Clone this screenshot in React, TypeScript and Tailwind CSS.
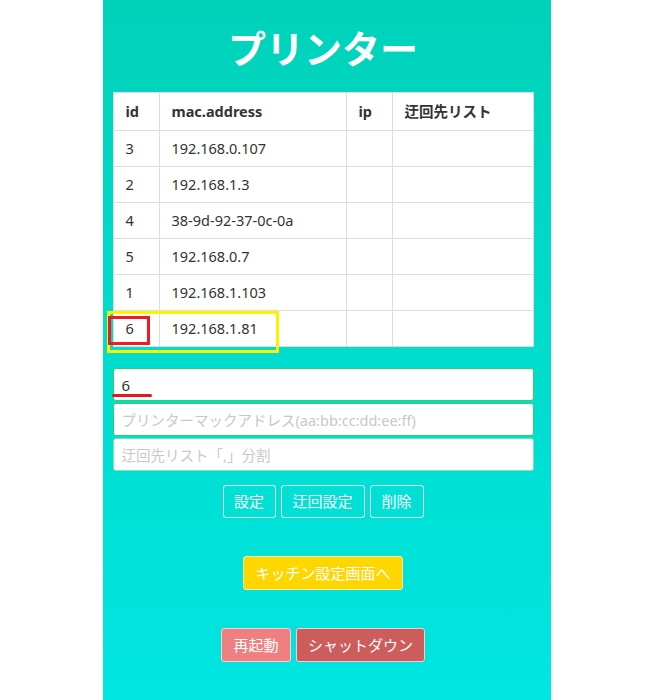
import { useState } from "react";

const printers = [
  { id: "3", mac: "192.168.0.107", ip: "", detour: "" },
  { id: "2", mac: "192.168.1.3", ip: "", detour: "" },
  { id: "4", mac: "38-9d-92-37-0c-0a", ip: "", detour: "" },
  { id: "5", mac: "192.168.0.7", ip: "", detour: "" },
  { id: "1", mac: "192.168.1.103", ip: "", detour: "" },
  { id: "6", mac: "192.168.1.81", ip: "", detour: "" },
];

const font = "font-['Noto_Sans','Noto_Sans_CJK_JP',sans-serif]";

export default function App() {
  const [printerId, setPrinterId] = useState("6");

  return (
    <div className={`flex min-h-[700px] justify-center bg-white ${font}`}>
      <main className="flex min-h-[700px] w-[448px] flex-col bg-gradient-to-b from-[#00d2b9] to-[#00e6e1] pb-10 pl-[10px] pr-[17px]">
        <h1 className="pt-[21px] pb-[17px] text-center text-[38px] leading-[54px] font-bold text-white">
          プリンター
        </h1>

        <div className="relative">
          <table className="w-full border-collapse bg-white text-[14.5px] text-[#333]">
            <thead>
              <tr className="h-[38px] text-left">
                <th className="w-[46px] border border-[#ddd] pl-3 font-bold">id</th>
                <th className="w-[187px] border border-[#ddd] pl-3 font-bold">mac.address</th>
                <th className="w-[46px] border border-[#ddd] pl-3 font-bold">ip</th>
                <th className="border border-[#ddd] pl-3 font-bold">迂回先リスト</th>
              </tr>
            </thead>
            <tbody>
              {printers.map((p) => (
                <tr key={p.id} className="h-[36px]">
                  <td className="border border-[#ddd] pl-3">{p.id}</td>
                  <td className="border border-[#ddd] pl-3">{p.mac}</td>
                  <td className="border border-[#ddd] pl-3">{p.ip}</td>
                  <td className="border border-[#ddd] pl-3">{p.detour}</td>
                </tr>
              ))}
            </tbody>
          </table>
          {/* annotation boxes */}
          <div className="pointer-events-none absolute top-[219px] left-[-6px] h-[42px] w-[172px] border-[3px] border-[#fff200]" />
          <div className="pointer-events-none absolute top-[224px] left-[-5px] h-[29px] w-[42px] border-[3px] border-[#ed1c24]" />
        </div>

        <form className="mt-[21px] flex flex-col gap-[2px]">
          <div className="relative">
            <input
              value={printerId}
              onChange={(e) => setPrinterId(e.target.value)}
              className="h-[33px] w-full rounded-[3px] border border-[#2fd06a] bg-white px-2 text-[15px] text-[#333] outline-none"
            />
            <div className="pointer-events-none absolute top-[26px] left-[-1px] h-[3px] w-[40px] rounded-full bg-[#e5161d]" />
          </div>
          <input
            placeholder="プリンターマックアドレス(aa:bb:cc:dd:ee:ff)"
            className="h-[33px] w-full rounded-[3px] border border-[#2fd06a] bg-white px-2 text-[14.5px] text-[#333] outline-none placeholder:text-[#c8c8c8]"
          />
          <input
            placeholder="迂回先リスト「,」分割"
            className="h-[33px] w-full rounded-[3px] border border-[#7fe3a4] bg-white px-2 text-[14.5px] text-[#333] outline-none placeholder:text-[#c8c8c8]"
          />

          <div className="mt-[12px] flex justify-center gap-[5px]">
            <button type="button" className="h-[33px] w-[53px] rounded-[3px] border border-[#e8fffb] text-[15px] text-white">
              設定
            </button>
            <button type="button" className="h-[33px] w-[84px] rounded-[3px] border border-[#e8fffb] text-[15px] text-white">
              迂回設定
            </button>
            <button type="button" className="h-[33px] w-[54px] rounded-[3px] border border-[#e8fffb] text-[15px] text-white">
              削除
            </button>
          </div>
        </form>

        <div className="mt-[38px] flex justify-center">
          <button type="button" className="h-[34px] w-[160px] rounded-[3px] border border-[#fff3a0] bg-[#ffd700] text-[15px] text-white">
            キッチン設定画面へ
          </button>
        </div>

        <div className="mt-[38px] flex justify-center gap-[5px]">
          <button type="button" className="h-[34px] w-[70px] rounded-[3px] border border-[#f5d0d0] bg-[#f08080] text-[15px] text-white">
            再起動
          </button>
          <button type="button" className="h-[34px] w-[129px] rounded-[3px] border border-[#f0d0d0] bg-[#cd5c5c] text-[15px] text-white">
            シャットダウン
          </button>
        </div>
      </main>
    </div>
  );
}
